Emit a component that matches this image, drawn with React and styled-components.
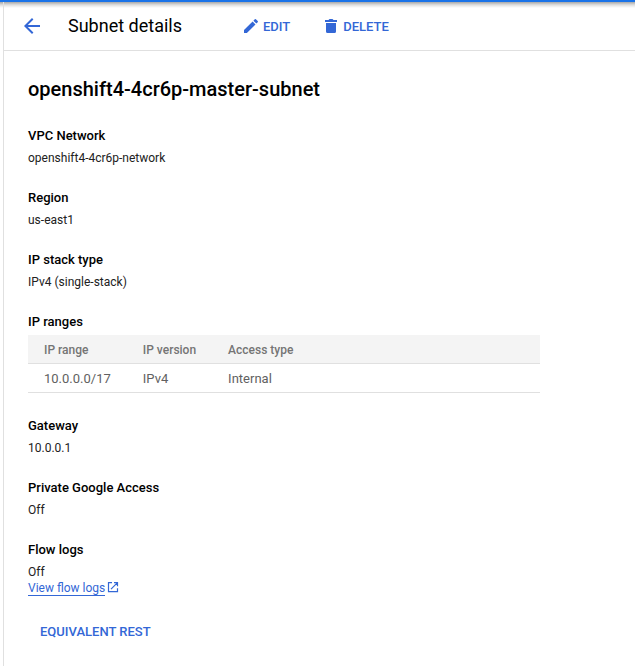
import React from 'react';
import styled, { createGlobalStyle } from 'styled-components';

const GlobalStyle = createGlobalStyle`
  *, *::before, *::after { box-sizing: border-box; }
  body { margin: 0; background: #fff; color: #212121; font: 400 12px/16px Roboto, sans-serif; }
  h1, h2, dl, dt, dd { margin: 0; }
`;

const Page = styled.div`
  min-height: 100vh;
  display: flex;
  flex-direction: column;
  border-top: 2px solid #1a73e8;
  background: linear-gradient(rgba(0, 0, 0, 0.34), rgba(0, 0, 0, 0.12) 3px, transparent 6px) no-repeat;
`;

const Panel = styled.main`
  flex: 1;
  margin-left: 3px;
  border-left: 1px solid #e0e0e0;
`;

const Toolbar = styled.header`
  display: flex;
  align-items: center;
  height: 49px;
  padding: 0 16px;
  border-bottom: 1px solid #e0e0e0;
`;

const BackButton = styled.button`
  display: flex;
  padding: 0;
  border: 0;
  background: none;
  color: #3367d6;
  cursor: pointer;
`;

const Title = styled.h1`
  margin: 0 48px 0 24px;
  color: #000;
  font-size: 18px;
  line-height: 24px;
  font-weight: 400;
`;

const Action = styled.button`
  display: flex;
  align-items: center;
  gap: 3px;
  padding: 0 12px;
  margin-right: 8px;
  border: 0;
  background: none;
  color: #3367d6;
  font: 500 13px/33px Roboto, sans-serif;
  text-transform: uppercase;
  cursor: pointer;
`;

const Content = styled.div`
  padding: 26px 24px 16px;
`;

const Name = styled.h2`
  margin-bottom: 25px;
  color: #000;
  font-size: 20px;
  line-height: 24px;
  font-weight: 500;
`;

const Field = styled.div`
  margin-bottom: 22px;

  &:last-child { margin-bottom: 19px; }
`;

const Label = styled.dt`
  margin-bottom: ${({ $tight }) => ($tight ? 3 : 4)}px;
  color: #000;
  font-size: 13px;
  line-height: 20px;
  font-weight: 500;
`;

const Table = styled.table`
  width: 100%;
  max-width: 512px;
  border-collapse: separate;
  border-spacing: 0;
  margin-bottom: 23px;

  th, td {
    height: 29px;
    padding: 2px 16px 0;
    border-bottom: 1px solid #e0e0e0;
    white-space: nowrap;
    text-align: left;
  }
  th:last-child { width: 100%; }
`;

const Th = styled.th`
  background: #f4f4f4;
  color: #757575;
  font-weight: 500;
`;

const Td = styled.td`
  color: #616161;
  font-size: 13px;
`;

const Link = styled.a`
  display: flex;
  width: fit-content;
  align-items: center;
  gap: 2px;
  color: #3367d6;
  text-decoration: none;

  span { box-shadow: inset 0 -1px #3367d6; }
`;

const BackIcon = () => (
  <svg width="24" height="24" viewBox="0 0 24 24" fill="currentColor" aria-hidden="true">
    <path d="M20 11H7.83l5.59-5.59L12 4l-8 8 8 8 1.41-1.41L7.83 13H20z" />
  </svg>
);

const EditIcon = () => (
  <svg width="18" height="18" viewBox="0 0 18 18" fill="currentColor" aria-hidden="true">
    <path d="M2 13.1V16h2.9l8.6-8.6-2.9-2.9zM15.7 5.2a.8.8 0 0 0 0-1.1l-1.8-1.8a.8.8 0 0 0-1.1 0l-1.4 1.4 2.9 2.9z" />
  </svg>
);

const DeleteIcon = () => (
  <svg width="18" height="18" viewBox="0 0 18 18" fill="currentColor" aria-hidden="true">
    <path d="M4 6h10v8.500a1.500 1.500 0 0 1-1.500 1.500h-7A1.500 1.500 0 0 1 4 14.500zM3 3h3.500l1-1h3l1 1H15v2H3z" />
  </svg>
);

const ExternalIcon = () => (
  <svg width="12" height="12" viewBox="0 0 12 12" fill="none" stroke="currentColor" strokeWidth="1.2" aria-hidden="true">
    <path d="M5 .7H1.500v9h9V6.200M7 .7h3.500v3.500M10.500.7L4 7.200" />
  </svg>
);

const fieldsBefore = [
  ['VPC Network', 'openshift4-4cr6p-network'],
  ['Region', 'us-east1'],
  ['IP stack type', 'IPv4 (single-stack)'],
];
const fieldsAfter = [
  ['Gateway', '10.0.0.1'],
  ['Private Google Access', 'Off'],
];

const Detail = ({ label, children }) => (
  <Field>
    <Label>{label}</Label>
    <dd>{children}</dd>
  </Field>
);

export default function App() {
  return (
    <Page>
      <GlobalStyle />
      <Panel>
        <Toolbar>
          <BackButton aria-label="Back"><BackIcon /></BackButton>
          <Title>Subnet details</Title>
          <Action><EditIcon />Edit</Action>
          <Action><DeleteIcon />Delete</Action>
        </Toolbar>
        <Content>
          <Name>openshift4-4cr6p-master-subnet</Name>
          <dl>
            {fieldsBefore.map(([l, v]) => <Detail key={l} label={l}>{v}</Detail>)}
            <div>
              <Label $tight id="ip-ranges">IP ranges</Label>
              <dd>
                <Table aria-labelledby="ip-ranges">
                  <thead>
                    <tr><Th>IP range</Th><Th>IP version</Th><Th>Access type</Th></tr>
                  </thead>
                  <tbody>
                    <tr><Td>10.0.0.0/17</Td><Td>IPv4</Td><Td>Internal</Td></tr>
                  </tbody>
                </Table>
              </dd>
            </div>
            {fieldsAfter.map(([l, v]) => <Detail key={l} label={l}>{v}</Detail>)}
            <Detail label="Flow logs">
              <div>Off</div>
              <Link href="#flow-logs">
                <span>View flow logs</span>
                <ExternalIcon />
              </Link>
            </Detail>
          </dl>
          <Action>Equivalent REST</Action>
        </Content>
      </Panel>
    </Page>
  );
}
